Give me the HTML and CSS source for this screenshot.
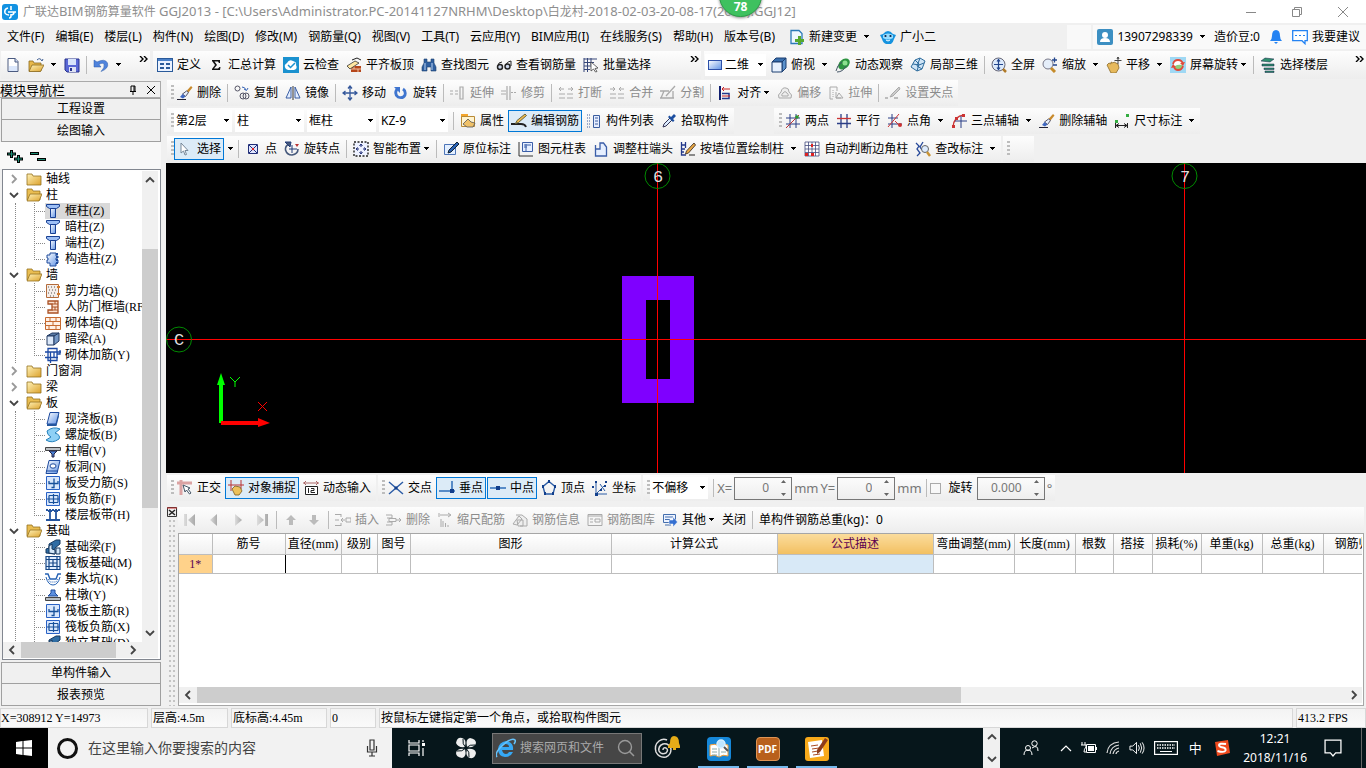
FILE: index.html
```html
<!DOCTYPE html>
<html lang="zh-CN">
<head>
<meta charset="utf-8">
<title>广联达BIM钢筋算量软件 GGJ2013</title>
<link rel="stylesheet" href="styles.css">
</head>
<body>
<svg class="defs" aria-hidden="true">
  <defs>
    <linearGradient id="blue" x1="0" y1="0" x2="1" y2="1"><stop offset="0" stop-color="#fff"/><stop offset="1" stop-color="#5f93e6"/></linearGradient>
    <linearGradient id="gold" x1="0" y1="0" x2="1" y2="1"><stop offset="0" stop-color="#fff2b8"/><stop offset="1" stop-color="#dca22c"/></linearGradient>
    <linearGradient id="grey" x1="0" y1="0" x2="1" y2="0"><stop offset="0" stop-color="#ddd"/><stop offset="1" stop-color="#aaa"/></linearGradient>
  </defs>
  <symbol id="arrow" viewBox="0 0 7 4"><path d="M1 0h5v1H5v1H4v1H3V2H2V1H1z" fill="#000"/></symbol>
  <symbol id="more" viewBox="0 0 9 6"><path d="M1 0l3 3-3 3M5 0l3 3-3 3" fill="none" stroke="#000" stroke-width="1.4"/></symbol>
  <symbol id="chev-r" viewBox="0 0 10 10"><path d="M3 1l4 4-4 4" fill="none" stroke="#999" stroke-width="1.8"/></symbol>
  <symbol id="chev-d" viewBox="0 0 10 10"><path d="M1 3l4 4 4-4" fill="none" stroke="#444" stroke-width="1.8"/></symbol>
  <symbol id="chev-u" viewBox="0 0 10 10"><path d="M1 7l4-4 4 4" fill="none" stroke="#444" stroke-width="1.8"/></symbol>
  <symbol id="sb-l" viewBox="0 0 10 10"><path d="M7 1L3 5l4 4" fill="none" stroke="#444" stroke-width="1.8"/></symbol>
  <symbol id="sb-r" viewBox="0 0 10 10"><path d="M3 1l4 4-4 4" fill="none" stroke="#444" stroke-width="1.8"/></symbol>

  <symbol id="logo" viewBox="0 0 16 16"><rect width="16" height="16" rx="3" fill="#1292e2"/><path d="M9 2v4M9 10v2q0 2-2 2M6 4Q2 5 3 9q1 2 4 2M6 8h8M12 8q0 3-3 3" fill="none" stroke="#fff" stroke-width="1.600"/></symbol>
  <symbol id="new" viewBox="0 0 16 16"><path d="M3 1.500h7l3 3V14.500H3z" fill="#fff" stroke="#4a5a80"/><path d="M4 9h8v5H4z" fill="#dbe7fb"/><path d="M10 1v4h3" fill="#cfdcf5" stroke="#4a5a80"/></symbol>
  <symbol id="open" viewBox="0 0 16 16"><path d="M1 4h4l1 2h7v8H1z" fill="#e8b84a" stroke="#8a6a20" stroke-width=".8"/><path d="M4 8h12l-3.500 6.500H1z" fill="url(#gold)" stroke="#8a6a20" stroke-width=".8"/><path d="M9 3q3-3 5 1l1-2" fill="none" stroke="#3a5a90"/></symbol>
  <symbol id="save" viewBox="0 0 16 16"><path d="M1 2h14v13H3l-2-2z" fill="#5a68d6" stroke="#28338c"/><path d="M4 2h8v6H4z" fill="#d8e4fb"/><path d="M5 10h7v5H5z" fill="#dfe3f3"/><path d="M6 11h2v3H6z" fill="#28338c"/></symbol>
  <symbol id="undo" viewBox="0 0 16 16"><path d="M1 3v7h7L6 7.500q4-2.500 5 0 1 3-3 7 8-3 6.500-8.500Q12 1 4 5z" fill="#4f83dc" stroke="#2858a8" stroke-width=".5"/></symbol>
  <symbol id="define" viewBox="0 0 16 16"><rect x=".500" y="1.500" width="15" height="13" fill="#eaf2ff" stroke="#2a5a9a"/><path d="M1 2h14v2H1z" fill="#4a80c8"/><path d="M3 6h4v2H3zM3 10h4v2H3zM9 6h4v2H9zM9 10h4v2H9z" fill="#2a5a9a"/></symbol>
  <symbol id="sum" viewBox="0 0 16 16"><path d="M4 3h8v3h-1l-1-1.500H6.500L9 8l-3 3.500h4L11.500 10h1L12 13H4v-1l3-4-3-4z" fill="#111"/></symbol>
  <symbol id="cloudcheck" viewBox="0 0 16 16"><rect width="16" height="16" fill="#1a91cf"/><path d="M3 12q-3-4 1-6 2-4 6-2 4 1 3 4 2 4-2 5H5z" fill="#fff"/><path d="M5 8l2.500 2.500L12 6" fill="none" stroke="#1a91cf" stroke-width="1.500"/></symbol>
  <symbol id="flat" viewBox="0 0 16 16"><path d="M5 9h10v6H5z" fill="#b5461a"/><path d="M5 12h10M8 9v3M12 12v3" stroke="#f0c0a0"/><path d="M1 9l8-5 4 2-9 6z" fill="#ffe6a0" stroke="#333" stroke-width=".8"/><path d="M6 3l5-2 4 2" fill="none" stroke="#222"/></symbol>
  <symbol id="find" viewBox="0 0 16 16"><path d="M3 2h3v3h4V2h3v4l2 4v4h-5v-4H6v4H1v-4l2-4z" fill="#2f5f9f" stroke="#1b3f70" stroke-width=".6"/><path d="M4 6v7M11 6v7" stroke="#bcd4f4"/></symbol>
  <symbol id="glasses" viewBox="0 0 16 16"><path d="M2 9q0-4 4-4M10 9q0-4 5-5v5" fill="none" stroke="#222"/><circle cx="4" cy="10" r="2.500" fill="#cdd7ec" stroke="#222" stroke-width="1.500"/><circle cx="11.500" cy="9.500" r="2.500" fill="#cdd7ec" stroke="#222" stroke-width="1.500"/></symbol>
  <symbol id="batch" viewBox="0 0 16 16"><path d="M1 1v14M1 2h13M1 5.500h10M1 9h7M1 12.500h6M4.500 1v14M8 1v7" stroke="#36477a" fill="none"/><path d="M8 5l7 6-3 .5 2 3-1.500.5-2-3L8 14z" fill="#fff" stroke="#444" stroke-width=".8"/></symbol>
  <symbol id="flat2d" viewBox="0 0 16 16"><rect x="1.500" y="3.500" width="13" height="9" fill="url(#blue)" stroke="#2c4fa8"/></symbol>
  <symbol id="cube" viewBox="0 0 16 16"><path d="M1 5l4-4h10l-4 4z" fill="#3a70ae" stroke="#1c3e70"/><path d="M11 5l4-4v10l-4 4z" fill="#5b92cc" stroke="#1c3e70"/><path d="M1 5h10v10H1z" fill="#e8f1fd" stroke="#1c3e70"/></symbol>
  <symbol id="orbit" viewBox="0 0 16 16"><ellipse cx="9" cy="7" rx="6.500" ry="4.500" transform="rotate(-40 9 7)" fill="#2d9440"/><circle cx="10" cy="6" r="2.500" fill="#8be08e"/><path d="M1 14q1-6 6-9M2 15q6 0 9-6" stroke="#456" fill="none"/></symbol>
  <symbol id="part3d" viewBox="0 0 16 16"><path d="M1 10l4-7 5-2 5 3-3 8-5 2z" fill="#cfe4f6" stroke="#2c6b9c"/><path d="M5 3l4 4-2 7M10 1L7 9l5 3M3 7l6 1 5-2" stroke="#2c6b9c" fill="none"/></symbol>
  <symbol id="full" viewBox="0 0 16 16"><circle cx="7.500" cy="7.500" r="6.500" fill="#dbe9fb" stroke="#667"/><path d="M7.500 3v9M3 7.500h9M6 4.500l1.500-2 1.500 2M6 10.500l1.500 2 1.500-2" stroke="#23458c" fill="none" stroke-width="1.200"/><path d="M12 12l3 3" stroke="#b07a28" stroke-width="2.500"/></symbol>
  <symbol id="zoom" viewBox="0 0 16 16"><circle cx="6" cy="7" r="5" fill="#e5eefa" stroke="#778"/><path d="M9 11l4 4" stroke="#c58b2a" stroke-width="3"/><path d="M10 3h5M12.500.5v5M11 8h4" stroke="#23458c" stroke-width="1.300"/></symbol>
  <symbol id="pan" viewBox="0 0 16 16"><path d="M1 8l2-2 2 1V5l2 1 1-1 2 1 2 1 1 4-3 5H5z" fill="#e6b95c" stroke="#8b6a28" stroke-width=".8"/><path d="M12 0v7M8.500 3.500h7M11 2l1-2 1 2" stroke="#444" fill="none"/></symbol>
  <symbol id="rotscreen" viewBox="0 0 16 16"><rect width="16" height="16" fill="#9fd8f4"/><path d="M4 4h8v8H4z" fill="#fff"/><path d="M4 12q0-5 8-4v4z" fill="#8fd07c"/><path d="M3 7q1-4 5-4 4 0 5 4M13 9q-1 4-5 4-3 0-4-3" fill="none" stroke="#e04a3a" stroke-width="1.800"/><path d="M15 5l-2 4-3-3zM1 11l2-4 3 3z" fill="#e04a3a"/></symbol>
  <symbol id="floors" viewBox="0 0 16 16"><path d="M1 4l4-3 9 1-4 3zM2 7h12v2H2zM4 11h10v1.500H4zM5 14h9v1.500H5z" fill="#2f8f6e" stroke="#124" stroke-width=".5"/></symbol>

  <symbol id="eraser" viewBox="0 0 16 16"><path d="M14 1l1.500 1.500-4 5L9.500 6z" fill="#c88a2c"/><path d="M9.500 6l2 1.500-3 4-3-2.500z" fill="#e7eefb" stroke="#556"/><path d="M5.500 9l3 2.500-2.500 2L3 12z" fill="#3f68c2"/><path d="M0 14.500h9" stroke="#223"/></symbol>
  <symbol id="copy" viewBox="0 0 16 16"><circle cx="3.500" cy="3.500" r="2.500" fill="none" stroke="#556"/><circle cx="9" cy="11" r="3" fill="#eee" stroke="#556"/><circle cx="12" cy="11" r="3" fill="none" stroke="#556"/><path d="M8 2q3 0 4 3m-2-1l2.500 1.500L14 3" fill="none" stroke="#3563b5"/></symbol>
  <symbol id="mirror" viewBox="0 0 16 16"><path d="M6 2v11H1zM10 2v11h5z" fill="#e4eeff" stroke="#3b5fa5"/><path d="M8 1v14" stroke="#333"/></symbol>
  <symbol id="move" viewBox="0 0 16 16"><path d="M8 1v14M1 8h14M6 3.500L8 1l2 2.500M6 12.500L8 15l2-2.500M3.500 6L1 8l2.500 2M12.500 6L15 8l-2.500 2" fill="none" stroke="#35589b" stroke-width="1.300"/></symbol>
  <symbol id="rotate" viewBox="0 0 16 16"><path d="M4 4q-3 5 1 8 5 2 7-2 1-4-2-6" fill="none" stroke="#3f75cf" stroke-width="2.800"/><path d="M1 2h6v6z" fill="#3f75cf"/></symbol>
  <symbol id="extend" viewBox="0 0 16 16"><path d="M0 6h3M0 9h3M5 6h3M5 9h3M10 2h3v12h-3z" fill="none" stroke="#aaa" stroke-width="1.200"/></symbol>
  <symbol id="trim" viewBox="0 0 16 16"><path d="M0 6h5M0 9h5M6 1v14M9 1v14M10 7.500h2M13 7.500h2" fill="none" stroke="#aaa" stroke-width="1.200"/></symbol>
  <symbol id="break" viewBox="0 0 16 16"><path d="M1 4h5M10 4h5M3 2L1 4l2 2M13 2l2 2-2 2M1 9h6M1 13h6M9 9h6M9 13h6" fill="none" stroke="#aaa"/></symbol>
  <symbol id="merge" viewBox="0 0 16 16"><path d="M1 4h5M10 4h5M4 2l2 2-2 2M12 2l-2 2 2 2M1 9h6M1 13h6M9 9h6M9 13h6" fill="none" stroke="#aaa"/></symbol>
  <symbol id="split" viewBox="0 0 16 16"><path d="M0 6h9M0 13h14M1 13l3-7M13 6v7M15 1L6 11" fill="none" stroke="#aaa" stroke-width="1.300"/></symbol>
  <symbol id="align" viewBox="0 0 16 16"><path d="M3 1v14" stroke="#111f70" stroke-width="2"/><path d="M5 4h8M5 4l2-2M5 4l2 2" stroke="#c22" fill="none"/><path d="M5 8.500h7v5H5" fill="none" stroke="#23388c" stroke-width="1.500"/><path d="M5 11h8" stroke="#c22"/></symbol>
  <symbol id="offset" viewBox="0 0 16 16"><path d="M2 13q-2-3 2-6 1-5 5-4 3 0 3 4 4 3 2 6z" fill="#eee" stroke="#aaa"/><path d="M5 11q-1-1 1-3 2-3 4 0 2 2 1 3z" fill="none" stroke="#aaa"/></symbol>
  <symbol id="stretch" viewBox="0 0 16 16"><path d="M2 2h7v4M2 2v12h3M8 7v6h5M11 8l4 5h-7z" fill="none" stroke="#aaa"/><path d="M5 5v8" stroke="#aaa" stroke-dasharray="1 1"/></symbol>
  <symbol id="grip-set" viewBox="0 0 16 16"><path d="M14 2L7 9l-2 3 3-1 7-7z" fill="#ccc" stroke="#aaa"/><path d="M0 13h3M9 13h4" stroke="#aaa" stroke-width="1.500"/></symbol>

  <symbol id="props" viewBox="0 0 16 16"><path d="M1 1h7v3H1z" fill="#f4a52c"/><path d="M1.500 3.500h13v10h-13z" fill="#fff3cf" stroke="#b98a35"/><path d="M3 11l5-5 3 3 4 1-2 4H7z" fill="#f0c168" stroke="#555" stroke-width=".8"/></symbol>
  <symbol id="editbar" viewBox="0 0 16 16"><path d="M0 11h10q4 0 5 3" fill="none" stroke="#222" stroke-width="1.800"/><path d="M14 1l1.500 1.500-8 7-3 1 1.500-3z" fill="#efb94a" stroke="#664"/></symbol>
  <symbol id="list" viewBox="0 0 16 16"><path d="M1 2h4M1 5h3M1 8h3M1 11h3M1 14h4" stroke="#3c5fa0" stroke-dasharray="1 1"/><path d="M7.500 2.500h6v12h-6z" fill="#e7eeff" stroke="#3c5fa0"/><path d="M9 5h3M9 8h3M9 11h3" stroke="#3c5fa0"/></symbol>
  <symbol id="pick" viewBox="0 0 16 16"><path d="M2 14l1-3 6-6 2 2-6 6z" fill="#dcecff" stroke="#335"/><path d="M7 4l5 5 1.500-1.500L12 6l3-3-2-2-3 3-1.500-1.500z" fill="#1d4fa0"/></symbol>
  <symbol id="twopt" viewBox="0 0 16 16"><path d="M1 5h14M1 11h14M5 1v14M11 1v14" stroke="#2b3e86"/><path d="M1 15L14 2" stroke="#b33"/><circle cx="12" cy="4" r="1.800" fill="#2a9a2a"/></symbol>
  <symbol id="parallel" viewBox="0 0 16 16"><path d="M1 10.500h14M5 1v14M11 1v14" stroke="#2b3e86" stroke-width="1.300"/><path d="M1 5.500h14" stroke="#c33" stroke-width="1.300"/></symbol>
  <symbol id="angle" viewBox="0 0 16 16"><path d="M1 5h10M1 11h14M5 1v14" stroke="#2b3e86"/><path d="M1 14L12 1M8 8l4 4" stroke="#c33" fill="none"/><circle cx="13" cy="12" r="2" fill="#c33"/></symbol>
  <symbol id="threept" viewBox="0 0 16 16"><path d="M2 14q1-11 11-12" stroke="#c33" fill="none" stroke-width="1.300"/><path d="M4 8h12M10 3v12" stroke="#2b3e86"/><path d="M1 12h3v3H1zM11 1h3v3h-3zM4 4h3v3H4z" fill="#c33"/></symbol>
  <symbol id="dim" viewBox="0 0 16 16"><path d="M1 7h3v3H1zM12 1h3v3h-3z" fill="#34ad41"/><path d="M1.500 10v5M13.500 10v5M2 12.500h11M5 10.500l-3 2 3 2M10 10.500l3 2-3 2" stroke="#222" fill="none"/></symbol>

  <symbol id="cursor" viewBox="0 0 16 16"><path d="M4 2v10l2.500-2L8 14l1.500-.5L8 9.500h3z" fill="#fff" stroke="#789"/></symbol>
  <symbol id="ptbox" viewBox="0 0 16 16"><path d="M3.500 3.500h9v9h-9z" fill="#dfe6ff" stroke="#222f79"/><path d="M4 4l8 8M12 4l-8 8" stroke="#222f79"/><circle cx="8" cy="8" r="1.200" fill="#d22"/></symbol>
  <symbol id="rotpt" viewBox="0 0 16 16"><path d="M5 3Q1 5 1.500 9 3 14 8 14q6-1 6-6" fill="none" stroke="#46597c" stroke-width="1.600"/><path d="M1 1l6 0-1 5zM8 4v8M5 8h8" stroke="#233d78" fill="#46597c"/><path d="M11 3l4 0-2 3z" fill="#b33"/></symbol>
  <symbol id="smart" viewBox="0 0 16 16"><path d="M1 1h14v14H1z" fill="#eef2ff" stroke="#222" stroke-width="1.400" stroke-dasharray="2 1.500"/><path d="M8 3v3M8 10v3M3 8h3M10 8h3M6.500 5L8 3l1.500 2M6.500 11L8 13l1.500-2M5 6.500L3 8l2 1.500M11 6.500L13 8l-2 1.500" stroke="#222f79" fill="none"/></symbol>
  <symbol id="note" viewBox="0 0 16 16"><path d="M1.500 3.500h11v10h-11z" fill="#e3efff" stroke="#4d75b8"/><path d="M14 1l2 2-8 8-3 1 1-3z" fill="#2a63b5" stroke="#123"/></symbol>
  <symbol id="coltable" viewBox="0 0 16 16"><path d="M1 1v14h14" stroke="#333" fill="none"/><path d="M4.500 1.500h10v9h-10z" fill="#e6efff" stroke="#3b5ea8"/><path d="M6 4h7M6 6h3M8 3v7" stroke="#3b5ea8"/></symbol>
  <symbol id="adjust" viewBox="0 0 16 16"><path d="M2.500 4v11h11V6l-3-4H7v6H3" fill="#e6efff" stroke="#3b5ea8" stroke-width="1.300"/></symbol>
  <symbol id="wallcol" viewBox="0 0 16 16"><path d="M1.500 1v13H6M5.500 1v6M1 4h5M1 8h4M1 11h3" fill="none" stroke="#243a8c" stroke-width="1.300"/><path d="M14 2l1.500 2-7 8-3 1 1-3z" fill="#eba943" stroke="#543"/><path d="M9 14h6" stroke="#222"/></symbol>
  <symbol id="autocorner" viewBox="0 0 16 16"><path d="M1 1h14v14H1zM1 4.500h14M1 8h14M1 11.500h14M4.500 1v14M8 1v14M11.500 1v14" fill="#fff" stroke="#444b7e" stroke-width=".8"/><path d="M7 3h2v3H7zM1 12h3v3H1zM7 12h3v3H7z" fill="#d22"/></symbol>
  <symbol id="check" viewBox="0 0 16 16"><path d="M1 2l3 3-2 3 3 4-3 3M8 1L5 6l2 3" stroke="#27499a" fill="none" stroke-width="1.300"/><circle cx="10" cy="8" r="3.500" fill="#dbeafd" stroke="#666"/><path d="M12 11l3 4" stroke="#c99333" stroke-width="2.500"/></symbol>

  <symbol id="ortho" viewBox="0 0 16 16"><path d="M0 3h15M4 0v15" stroke="#dba3a3" stroke-width="3"/><path d="M6 5l2 7 1.500-2 3 4 1.500-1-3-4 2-1z" fill="#fff" stroke="#456"/></symbol>
  <symbol id="snap" viewBox="0 0 16 16"><path d="M0 5h16M3 0v11M13 0v9" stroke="#b33"/><path d="M4 9l3-3 5 1 2 4-3 4H7z" fill="#edc15b" stroke="#7a5b1f" stroke-width=".8"/></symbol>
  <symbol id="dyn" viewBox="0 0 16 16"><path d="M0 3h16M3 1L1 3l2 2M13 1l2 2-2 2" stroke="#a66" fill="none"/><path d="M2.500 6.500h12v8h-12z" fill="#fff" stroke="#222"/><path d="M5.500 8v5M8 8.500h3v2H8v2h4" stroke="#222" fill="none"/></symbol>
  <symbol id="cross" viewBox="0 0 16 16"><path d="M1 2l14 12M15 2L1 14" stroke="#2d5da6" stroke-width="1.500"/><path d="M6.500 6.500h3v3h-3z" fill="#123f8c"/></symbol>
  <symbol id="perp" viewBox="0 0 16 16"><path d="M0 11h16M13 1v11" stroke="#2d6db8" stroke-width="1.500"/><path d="M11 9h4v4h-4z" fill="#123f8c"/></symbol>
  <symbol id="mid" viewBox="0 0 16 16"><path d="M0 8h16" stroke="#2d6db8" stroke-width="1.500"/><path d="M6 6h4v4H6z" fill="#123f8c"/></symbol>
  <symbol id="vertex" viewBox="0 0 16 16"><path d="M8 1.500l6 5L12 14H4L2 6.500z" fill="none" stroke="#2d5da6" stroke-width="1.400"/><path d="M7 0h2v3H7zM1 5h2v3H1zM13 5h2v3h-2zM3 12h2v3H3zM11 12h2v3h-2z" fill="#123f8c"/></symbol>
  <symbol id="coord" viewBox="0 0 16 16"><path d="M4 3v11h11M4 14l9-9M8 4l5 7" stroke="#2d5da6" fill="none"/><path d="M3 1h2v2H3zM13 1h2v2h-2zM12 5h2v2h-2zM3 13h3v3H3zM0 6h2v2H0zM8 9h2v2H8z" fill="#123f8c"/></symbol>

  <symbol id="first" viewBox="0 0 16 16"><path d="M2 2h3v12H2zM13 2v12L6 8z" fill="url(#grey)"/></symbol>
  <symbol id="prev" viewBox="0 0 16 16"><path d="M11 2v12L4 8z" fill="url(#grey)"/></symbol>
  <symbol id="next" viewBox="0 0 16 16"><path d="M5 2v12l7-6z" fill="url(#grey)"/></symbol>
  <symbol id="last" viewBox="0 0 16 16"><path d="M3 2v12l7-6zM11 2h3v12h-3z" fill="url(#grey)"/></symbol>
  <symbol id="up" viewBox="0 0 16 16"><path d="M8 3l5 5h-3v5H6V8H3z" fill="#bbb"/></symbol>
  <symbol id="down" viewBox="0 0 16 16"><path d="M8 13l5-5h-3V3H6v5H3z" fill="#bbb"/></symbol>
  <symbol id="insert" viewBox="0 0 16 16"><path d="M0 2.500h6M0 8h4M0 13.500h6M6 2v3M6 11v3M6 8h4M8 6L6 8l2 2M11 6h5v4h-5z" fill="none" stroke="#aaa"/></symbol>
  <symbol id="delrow" viewBox="0 0 16 16"><path d="M0 3h6v3H1M0 13h6v-3H1M3 6.500h7v3H3zM10 8h5M13 6l2 2-2 2" fill="none" stroke="#aaa"/></symbol>
  <symbol id="scale" viewBox="0 0 16 16"><path d="M3 3h10M11 1l3 2-3 2M2 1v4M4 7v8M6 9v6M8.500 11v4M11 13v2" fill="none" stroke="#aaa"/></symbol>
  <symbol id="info" viewBox="0 0 16 16"><path d="M4 3h6l5 4v7H8M1 12l6-8 3 3-5 6zM5 8h6v6H6z" fill="#eee" stroke="#aaa"/></symbol>
  <symbol id="lib" viewBox="0 0 16 16"><path d="M1 2.500h14v11H1z" fill="#f5f5f5" stroke="#aaa"/><path d="M1 4h14M3 7h3M3 10h3M8 7h5v3H8z" stroke="#aaa" fill="none"/></symbol>
  <symbol id="other" viewBox="0 0 16 16"><path d="M1.500 2.500h12v8h-12zM3 13h6" fill="#edf3ff" stroke="#456fae"/><path d="M3 5h8M3 7.500h5" stroke="#456fae"/><path d="M7 8h4V5l4.500 5-4.500 5v-3H7z" fill="#356fd0" stroke="#fff" stroke-width=".5"/></symbol>

  <symbol id="change" viewBox="0 0 16 16"><path d="M2 1.500h8l3 3v10H2z" fill="#eff7ff" stroke="#2b7ab8" stroke-width="1.300"/><path d="M9 7h3v3h3v3h-3v3H9v-3H6v-3h3z" fill="#56a82e"/></symbol>
  <symbol id="mascot" viewBox="0 0 16 16"><path d="M0 6l3-1Q8-1 13 5l3 1-2 4q-1 4-3 5H6q-3-1-4-5z" fill="#1693df"/><path d="M3 6q5-3 10 0v3q-5 3-10 0z" fill="#96dcff"/><circle cx="5.500" cy="7" r="1.100" fill="#124"/><circle cx="10.500" cy="7" r="1.100" fill="#124"/><path d="M6 11q2 2 4 0" stroke="#fff" fill="none"/></symbol>
  <symbol id="user" viewBox="0 0 16 16"><rect width="16" height="16" rx="2" fill="#3c8fc2"/><circle cx="8" cy="6" r="3" fill="#fff"/><path d="M3 13q0-4 5-4t5 4z" fill="#fff"/></symbol>
  <symbol id="bell" viewBox="0 0 16 16"><path d="M8 1q4 0 4 6 0 3 2 5H2q2-2 2-5 0-6 4-6zM6 13h4l-2 2z" fill="#2483f3"/></symbol>
  <symbol id="bubble" viewBox="0 0 16 16"><path d="M.700 1.700h14.600v10H13v3l-3-3H.700z" fill="#fff" stroke="#2483f3" stroke-width="1.300"/><path d="M3 6.500h2M7 6.500h2M11 6.500h2" stroke="#2483f3"/></symbol>

  <symbol id="folder" viewBox="0 0 16 16"><path d="M1 3h5l1 2h8v9H1z" fill="url(#gold)" stroke="#94711f" stroke-width=".800"/></symbol>
  <symbol id="folder-open" viewBox="0 0 16 16"><path d="M1 2h5l1 2h7v9H1z" fill="#e9bd51" stroke="#94711f" stroke-width=".800"/><path d="M4 7h12l-3 7H1z" fill="url(#gold)" stroke="#94711f" stroke-width=".800"/></symbol>
  <symbol id="column" viewBox="0 0 16 16"><path d="M1.500 1.500h13v2l-3 2h-7l-3-2z" fill="#9dbff5" stroke="#173f93"/><path d="M5.500 5.500h5v9h-5z" fill="url(#blue)" stroke="#173f93"/></symbol>
  <symbol id="strcol" viewBox="0 0 16 16"><path d="M5 2h6v3h2v2h-2v2h2v3h-2v3H5v-3H2V9h1V7H2V4h3z" fill="url(#blue)" stroke="#204c9c"/><path d="M12 2v12" stroke="#204c9c" stroke-width="2" stroke-dasharray="2 1"/></symbol>
  <symbol id="shear" viewBox="0 0 16 16"><path d="M1.500 1.500h12v13h-12z" fill="#f5ede8" stroke="#b46b3b"/><path d="M3 4h9M4 7h8M3 10h9M5 13h6" stroke="#555" stroke-dasharray="1 2"/><path d="M12 4h3M12 11h3" stroke="#d67c2c" stroke-width="2"/></symbol>
  <symbol id="guard" viewBox="0 0 16 16"><path d="M3 2h10v12H3v-3h4V5H3z" fill="#fbe0cf" stroke="#aa5226" stroke-width="1.300"/><path d="M7 5h6M7 8h6M7 11h6M10 2v3M10 8v3" stroke="#aa5226"/></symbol>
  <symbol id="brick" viewBox="0 0 16 16"><path d="M.500 2.500h15v12H.500zM1 6.500h14M1 10.500h14M5 3v3M11 3v3M8 7v3M4 11v3M11 11v3" fill="#fff1e6" stroke="#c66b31"/></symbol>
  <symbol id="hbeam" viewBox="0 0 16 16"><path d="M2 5l5-3h7l-4 3z" fill="#5a7ba5" stroke="#223a62"/><path d="M2 5h7v9H2z" fill="#dce9fa" stroke="#223a62"/><path d="M9 5l5-3v8l-5 4z" fill="#7497c5" stroke="#223a62"/></symbol>
  <symbol id="rebar" viewBox="0 0 16 16"><path d="M3 1.500h9v12H3zM0 5h16M0 10.500h13M5.500 5v11M9 5v6M12 7h3V3" fill="none" stroke="#1d4aa5" stroke-width="1.300"/></symbol>
  <symbol id="slab" viewBox="0 0 16 16"><path d="M5 1.500h9L11 13H2z" fill="url(#blue)" stroke="#1d4a9e"/><path d="M2 13h9l3-11v3l-2.500 10H2z" fill="#23569f"/></symbol>
  <symbol id="spiral" viewBox="0 0 16 16"><path d="M2 4q6-5 13-2l-5 4q6 2 4 6-7 5-13 1l5-3Q2 8 2 4z" fill="#8ed0f5" stroke="#2581bd"/></symbol>
  <symbol id="cap" viewBox="0 0 16 16"><path d="M.500 4.500h15v3H.500z" fill="#bcc0c4" stroke="#444"/><path d="M4 8h8l-3 3v3H7v-3z" fill="#4a7fd2" stroke="#224"/></symbol>
  <symbol id="hole" viewBox="0 0 16 16"><path d="M4 1.500h11L12 14.500H1z" fill="url(#blue)" stroke="#1d4a9e"/><ellipse cx="8" cy="7" rx="3" ry="2.200" fill="#fff" stroke="#1d4a9e"/><path d="M1 12h12" stroke="#1d4a9e"/></symbol>
  <symbol id="sforce" viewBox="0 0 16 16"><path d="M1.500 1.500h13v13h-13z" fill="#d9e7fc" stroke="#2a62c5"/><path d="M4 6v2.500h9V6M9 3.500v9H6.500" fill="none" stroke="#17509a" stroke-width="1.300"/></symbol>
  <symbol id="sneg" viewBox="0 0 16 16"><path d="M1.500 1.500h13v13h-13z" fill="#d9e7fc" stroke="#2a62c5"/><path d="M4 4.500h9M8.500 3v10M2 8h12M4 11.500h9M4 4.500v7M13 4.500v7" fill="none" stroke="#17509a" stroke-width="1.200"/></symbol>
  <symbol id="band" viewBox="0 0 16 16"><path d="M1 3h14" stroke="#24549f" stroke-width="2" stroke-dasharray="2 1"/><path d="M5 4v8M11 4v8M3 4h4M9 4h4M1 13h14" stroke="#24549f" stroke-width="1.800"/></symbol>
  <symbol id="fbeam" viewBox="0 0 16 16"><path d="M1 14v-4l3-1V5l7-4h4v4l-5 4v6z" fill="#2f6da4" stroke="#17395f"/><path d="M4 14V7l3-2v5l3 1v4zM11 9h4v6h-4z" fill="#d5e8f8" stroke="#17395f"/></symbol>
  <symbol id="raft" viewBox="0 0 16 16"><path d="M1 1.500h14v13H1zM4 1v14M12 1v14M1 4.500h14M1 11.500h14M8 4v8M4 8h8" fill="#e4f0ff" stroke="#174888" stroke-width="1.200"/></symbol>
  <symbol id="pit" viewBox="0 0 16 16"><path d="M0 3h3l2 5h6l2-5h3" fill="none" stroke="#2461b4" stroke-width="1.400"/><path d="M1 6q2 8 7 8t7-8" stroke="#2461b4" fill="none"/><path d="M3 8l2 3h6l2-3" stroke="#2461b4" stroke-dasharray="1 1" fill="none"/></symbol>
  <symbol id="pier" viewBox="0 0 16 16"><path d="M6 3h4v3l3 3H3l3-3z" fill="#5b8fe0" stroke="#204c9c"/><path d="M.500 10.500h15v3H.500z" fill="#b7bdc4" stroke="#444"/></symbol>

  <symbol id="t-win" viewBox="0 0 16 16"><path d="M0 2l6.500-1v6.500H0zM7.500.900L16 0v7.500H7.500zM0 8.500h6.500V15L0 14zM7.500 8.500H16V16l-8.500-1z" fill="#fff"/></symbol>
  <symbol id="t-mic" viewBox="0 0 12 18"><path d="M4 1h4v10H4zM1.500 7v6h9V7M6 13v4M3 17h6" fill="none" stroke="#333" stroke-width="1.200"/></symbol>
  <symbol id="t-view" viewBox="0 0 18 16"><path d="M1 0v3h10V0M1 5h10v6H1zM1 16v-3h10v3" fill="none" stroke="#fff" stroke-width="1.200"/><path d="M15 0v2M15 8v8" stroke="#fff" stroke-width="1.200"/><path d="M14 3h3v3h-3z" fill="#fff"/></symbol>
  <symbol id="t-fan" viewBox="0 0 22 22"><path d="M10 10Q3 11 1 6 2 0 7 1q5 1 3 9zM12 10Q10 2 15 1q6 1 6 5-1 5-9 4zM12 12q8-1 9 4-1 6-6 5-5-1-3-9zM10 12q2 8-3 9-6-1-6-5 1-5 9-4z" fill="#eee"/><path d="M11 11Q7 7 8 2M11 11q4-4 9-3M11 11q4 4 3 9M11 11q-4 4-9 3" stroke="#06161b" fill="none"/></symbol>
  <symbol id="t-ie" viewBox="0 0 20 20"><path d="M17 14q-2 5-8 5-7-1-7-8 1-7 8-8 8 1 7 9H6q1 4 4 4 2 0 3-2zM6 9h7q0-3-3.500-3T6 9z" fill="#36a8f4"/><path d="M1 19q-3-4 6-12 9-8 12-5 1 1-1 4" fill="none" stroke="#66c3fb" stroke-width="1.600"/></symbol>
  <symbol id="t-mag" viewBox="0 0 18 18"><circle cx="8" cy="8" r="6.500" fill="none" stroke="#999" stroke-width="1.400"/><path d="M12.500 12.500L17 17" stroke="#999" stroke-width="1.500"/></symbol>
  <symbol id="t-spiral" viewBox="0 0 28 26"><path d="M10 15q0-3 3-2 3 2 0 5-5 2-7-2-1-5 4-7 6-1 8 5 0 6-5 8-7 1-10-5-2-7 3-11 4-3 8-1" fill="none" stroke="#ddd" stroke-width="1.500"/><path d="M21 1q5 0 5 7l1 3v2H15v-2l2-3q0-7 4-7zM20 13h3v2h-3z" fill="#e6ac18"/></symbol>
  <symbol id="t-book" viewBox="0 0 24 24"><rect width="24" height="24" rx="4" fill="#1687d8"/><path d="M3 8q5-2 9 1 4-3 9-1v11q-5-2-9 1-4-3-9-1z" fill="#fff" stroke="#ef9b33"/><path d="M12 9v11M5 12h5M5 15h5M14 15h5M5 18h5" stroke="#8aa" fill="none"/><circle cx="14" cy="7" r="4" fill="#bfe6ff" stroke="#d8f0ff" stroke-width="1.500"/><path d="M17 10l4 4" stroke="#555" stroke-width="2"/></symbol>
  <symbol id="t-note" viewBox="0 0 24 24"><rect width="24" height="24" rx="3" fill="#f7a91a"/><path d="M3 5l14-2 2 16-14 2z" fill="#fff"/><path d="M6 9l7-1M7 12l7-1M7 15l6-1M8 18l7-1" stroke="#a84b23"/><path d="M20 1l3 2-8 12-3 2v-4z" fill="#8c3c1c"/></symbol>
  <symbol id="t-people" viewBox="0 0 16 16"><circle cx="5" cy="8" r="2.500" fill="none" stroke="#fff"/><circle cx="11.500" cy="3.500" r="2.700" fill="none" stroke="#fff"/><path d="M1 15q0-5 4-5t4 5M9 8q6-4 6 3" fill="none" stroke="#fff"/></symbol>
  <symbol id="t-chev" viewBox="0 0 12 12"><path d="M1 9l5-5 5 5" fill="none" stroke="#fff" stroke-width="1.200"/></symbol>
  <symbol id="t-bat" viewBox="0 0 16 16"><path d="M5.500 4.500h9v8h-9z" fill="none" stroke="#fff"/><path d="M7 6h6v5H7zM15 7h1v3h-1z" fill="#fff"/><path d="M1 2v3M4 2v3M0 5h5v2q-2 2-2 5h2" stroke="#fff" fill="none"/></symbol>
  <symbol id="t-wifi" viewBox="0 0 14 14"><path d="M1 12Q2 2 13 1M4 13Q5 5 13 4M7 13q1-5 6-6M10 13q0-2 3-3" fill="none" stroke="#ddd" stroke-width="1.200"/></symbol>
  <symbol id="t-vol" viewBox="0 0 17 14"><path d="M1 5h3l4-4v12L4 9H1z" fill="none" stroke="#fff"/><path d="M10 4q2 3 0 6M12 2q3 5 0 10M14 1q4 6 0 12" fill="none" stroke="#fff"/></symbol>
  <symbol id="t-kbd" viewBox="0 0 24 14"><rect x=".600" y=".600" width="22.800" height="12.800" fill="none" stroke="#fff" stroke-width="1.200"/><path d="M3 4h18M3 7h18" stroke="#fff" stroke-width="1.300" stroke-dasharray="1.500 1"/><path d="M6 10.500h12" stroke="#fff"/></symbol>
  <symbol id="t-sogou" viewBox="0 0 16 16"><path d="M1 2l13-2 2 13-13 3z" fill="#ef4a1e"/><path d="M12 4q-7-1-7 1 0 2 4 2.500 3 .5 2.500 3-1 2.500-8 .5" fill="none" stroke="#fff" stroke-width="2"/></symbol>
  <symbol id="t-msg" viewBox="0 0 17 17"><path d="M1 1h15v12h-5l-2.500 3L6 13H1z" fill="none" stroke="#fff" stroke-width="1.200"/></symbol>
</svg>

<div class="window">
  <header class="titlebar">
    <svg class="ic"><use href="#logo"/></svg>
    <h1><span>广联达</span>BIM<span>钢筋算量软件</span> GGJ2013 - [C:\Users\Administrator.PC-20141127NRHM\Desktop\<span>白龙村</span>-2018-02-03-20-08-17(2666).GGJ12]</h1>
    <span class="badge">78</span>
    <div class="wincontrols">
      <button aria-label="最小化"><svg viewBox="0 0 10 10"><path d="M0 5.500h10" stroke="#888"/></svg></button>
      <button aria-label="还原"><svg viewBox="0 0 10 10"><path d="M.500 2.500h7v7h-7zM2.500 2V.500h7v7H8" fill="none" stroke="#888"/></svg></button>
      <button aria-label="关闭"><svg viewBox="0 0 10 10"><path d="M0 0l10 10M10 0L0 10" stroke="#888"/></svg></button>
    </div>
  </header>

  <nav class="menubar">
    <button>文件(F)</button><button>编辑(E)</button><button>楼层(L)</button><button>构件(N)</button><button>绘图(D)</button><button>修改(M)</button><button>钢筋量(Q)</button><button>视图(V)</button><button>工具(T)</button><button>云应用(Y)</button><button>BIM应用(I)</button><button>在线服务(S)</button><button>帮助(H)</button><button>版本号(B)</button>
    <button class="tool"><svg class="ic"><use href="#change"/></svg>新建变更<svg class="arr"><use href="#arrow"/></svg></button>
    <button class="tool"><svg class="ic"><use href="#mascot"/></svg>广小二</button>
    <span class="stub"></span>
    <div class="account">
      <button class="tool"><svg class="ic"><use href="#user"/></svg>13907298339<svg class="arr"><use href="#arrow"/></svg></button>
      <button class="tool">造价豆:0</button>
      <button class="tool" aria-label="通知"><svg class="ic"><use href="#bell"/></svg></button>
      <button class="tool"><svg class="ic"><use href="#bubble"/></svg>我要建议</button>
    </div>
  </nav>

  <div class="toprow">
    <div class="group quick">
      <button class="tool" aria-label="新建"><svg class="ic"><use href="#new"/></svg></button>
      <button class="tool" aria-label="打开"><svg class="ic"><use href="#open"/></svg><svg class="arr"><use href="#arrow"/></svg></button>
      <button class="tool" aria-label="保存"><svg class="ic"><use href="#save"/></svg></button>
      <i class="sep"></i>
      <button class="tool" aria-label="撤销"><svg class="ic"><use href="#undo"/></svg><svg class="arr"><use href="#arrow"/></svg></button>
      <svg class="more"><use href="#more"/></svg>
    </div>
    <div class="group common">
      <button class="tool"><svg class="ic"><use href="#define"/></svg>定义</button>
      <button class="tool"><svg class="ic"><use href="#sum"/></svg>汇总计算</button>
      <button class="tool"><svg class="ic"><use href="#cloudcheck"/></svg>云检查</button>
      <button class="tool"><svg class="ic"><use href="#flat"/></svg>平齐板顶</button>
      <button class="tool"><svg class="ic"><use href="#find"/></svg>查找图元</button>
      <button class="tool"><svg class="ic"><use href="#glasses"/></svg>查看钢筋量</button>
      <button class="tool"><svg class="ic"><use href="#batch"/></svg>批量选择</button>
      <svg class="more"><use href="#more"/></svg>
    </div>
    <div class="group view">
      <label class="combo c-view"><svg class="ic"><use href="#flat2d"/></svg><select aria-label="视图模式"><option>二维</option></select><svg class="arr"><use href="#arrow"/></svg></label>
      <button class="tool"><svg class="ic"><use href="#cube"/></svg>俯视<svg class="arr"><use href="#arrow"/></svg></button>
      <button class="tool"><svg class="ic"><use href="#orbit"/></svg>动态观察</button>
      <button class="tool"><svg class="ic"><use href="#part3d"/></svg>局部三维</button>
      <i class="sep"></i>
      <button class="tool"><svg class="ic"><use href="#full"/></svg>全屏</button>
      <button class="tool"><svg class="ic"><use href="#zoom"/></svg>缩放<svg class="arr"><use href="#arrow"/></svg></button>
      <button class="tool"><svg class="ic"><use href="#pan"/></svg>平移<svg class="arr"><use href="#arrow"/></svg></button>
      <button class="tool"><svg class="ic"><use href="#rotscreen"/></svg>屏幕旋转<svg class="arr tight"><use href="#arrow"/></svg></button>
      <i class="sep"></i>
      <button class="tool"><svg class="ic"><use href="#floors"/></svg>选择楼层</button>
      <svg class="more"><use href="#more"/></svg>
    </div>
  </div>

  <div class="body">
    <aside class="side">
      <div class="side-title"><h2>模块导航栏</h2>
        <button aria-label="固定"><svg viewBox="0 0 10 10"><path d="M2 6.500h6M3 6V1h4v5M6 1v5M5 7v3" fill="none" stroke="#000"/></svg></button>
        <button aria-label="关闭"><svg viewBox="0 0 10 10"><path d="M1 1l8 8M9 1L1 9" stroke="#000"/></svg></button>
      </div>
      <button class="section">工程设置</button>
      <button class="section">绘图输入</button>
      <div class="side-tools">
        <button aria-label="全部展开"><svg viewBox="0 0 16 13"><path d="M4.500 0v8M0 4h9" stroke="#000" stroke-width="3"/><path d="M4.500 1v6M1 4h7" stroke="#1b8d74"/><path d="M11.500 5v8M7 9h9" stroke="#000" stroke-width="3"/><path d="M11.500 6v6M8 9h7" stroke="#1b8d74"/></svg></button>
        <button aria-label="全部折叠"><svg viewBox="0 0 16 13"><path d="M0 3.500h9M7 9.500h9" stroke="#000" stroke-width="3"/><path d="M1 3.500h7M8 9.500h7" stroke="#1b8d74"/></svg></button>
      </div>
      <div class="treebox">
        <div class="treeview">
          <ul class="tree">
            <li><div class="node"><svg class="chev"><use href="#chev-r"/></svg><svg class="ic"><use href="#folder"/></svg>轴线</div></li>
            <li><div class="node"><svg class="chev"><use href="#chev-d"/></svg><svg class="ic"><use href="#folder-open"/></svg>柱</div>
              <ul>
                <li><span class="leaf on"><svg class="ic"><use href="#column"/></svg>框柱(Z)</span></li>
                <li><span class="leaf"><svg class="ic"><use href="#column"/></svg>暗柱(Z)</span></li>
                <li><span class="leaf"><svg class="ic"><use href="#column"/></svg>端柱(Z)</span></li>
                <li><span class="leaf"><svg class="ic"><use href="#strcol"/></svg>构造柱(Z)</span></li>
              </ul></li>
            <li><div class="node"><svg class="chev"><use href="#chev-d"/></svg><svg class="ic"><use href="#folder-open"/></svg>墙</div>
              <ul>
                <li><span class="leaf"><svg class="ic"><use href="#shear"/></svg>剪力墙(Q)</span></li>
                <li><span class="leaf"><svg class="ic"><use href="#guard"/></svg>人防门框墙(RF)</span></li>
                <li><span class="leaf"><svg class="ic"><use href="#brick"/></svg>砌体墙(Q)</span></li>
                <li><span class="leaf"><svg class="ic"><use href="#hbeam"/></svg>暗梁(A)</span></li>
                <li><span class="leaf"><svg class="ic"><use href="#rebar"/></svg>砌体加筋(Y)</span></li>
              </ul></li>
            <li><div class="node"><svg class="chev"><use href="#chev-r"/></svg><svg class="ic"><use href="#folder"/></svg>门窗洞</div></li>
            <li><div class="node"><svg class="chev"><use href="#chev-r"/></svg><svg class="ic"><use href="#folder"/></svg>梁</div></li>
            <li><div class="node"><svg class="chev"><use href="#chev-d"/></svg><svg class="ic"><use href="#folder-open"/></svg>板</div>
              <ul>
                <li><span class="leaf"><svg class="ic"><use href="#slab"/></svg>现浇板(B)</span></li>
                <li><span class="leaf"><svg class="ic"><use href="#spiral"/></svg>螺旋板(B)</span></li>
                <li><span class="leaf"><svg class="ic"><use href="#cap"/></svg>柱帽(V)</span></li>
                <li><span class="leaf"><svg class="ic"><use href="#hole"/></svg>板洞(N)</span></li>
                <li><span class="leaf"><svg class="ic"><use href="#sforce"/></svg>板受力筋(S)</span></li>
                <li><span class="leaf"><svg class="ic"><use href="#sneg"/></svg>板负筋(F)</span></li>
                <li><span class="leaf"><svg class="ic"><use href="#band"/></svg>楼层板带(H)</span></li>
              </ul></li>
            <li><div class="node"><svg class="chev"><use href="#chev-d"/></svg><svg class="ic"><use href="#folder-open"/></svg>基础</div>
              <ul>
                <li><span class="leaf"><svg class="ic"><use href="#fbeam"/></svg>基础梁(F)</span></li>
                <li><span class="leaf"><svg class="ic"><use href="#raft"/></svg>筏板基础(M)</span></li>
                <li><span class="leaf"><svg class="ic"><use href="#pit"/></svg>集水坑(K)</span></li>
                <li><span class="leaf"><svg class="ic"><use href="#pier"/></svg>柱墩(Y)</span></li>
                <li><span class="leaf"><svg class="ic"><use href="#sforce"/></svg>筏板主筋(R)</span></li>
                <li><span class="leaf"><svg class="ic"><use href="#sneg"/></svg>筏板负筋(X)</span></li>
                <li class="open-end"><span class="leaf"><svg class="ic"><use href="#fbeam"/></svg>独立基础(D)</span></li>
              </ul></li>
          </ul>
          <div class="vbar"><svg><use href="#chev-u"/></svg><i></i><svg><use href="#chev-d"/></svg></div>
        </div>
        <div class="hbar side-h"><svg><use href="#sb-l"/></svg><i></i><svg><use href="#sb-r"/></svg></div>
      </div>
      <button class="section">单构件输入</button>
      <button class="section">报表预览</button>
    </aside>

    <main class="work">
      <div class="toolrow">
        <div class="group">
          <i class="grip"></i>
          <button class="tool"><svg class="ic"><use href="#eraser"/></svg>删除</button>
          <i class="sep"></i>
          <button class="tool"><svg class="ic"><use href="#copy"/></svg>复制</button>
          <button class="tool"><svg class="ic"><use href="#mirror"/></svg>镜像</button>
          <i class="sep"></i>
          <button class="tool"><svg class="ic"><use href="#move"/></svg>移动</button>
          <button class="tool"><svg class="ic"><use href="#rotate"/></svg>旋转</button>
          <i class="sep"></i>
          <button class="tool" disabled><svg class="ic"><use href="#extend"/></svg>延伸</button>
          <button class="tool" disabled><svg class="ic"><use href="#trim"/></svg>修剪</button>
          <i class="sep"></i>
          <button class="tool" disabled><svg class="ic"><use href="#break"/></svg>打断</button>
          <button class="tool" disabled><svg class="ic"><use href="#merge"/></svg>合并</button>
          <button class="tool" disabled><svg class="ic"><use href="#split"/></svg>分割</button>
          <i class="sep"></i>
          <button class="tool"><svg class="ic"><use href="#align"/></svg>对齐<svg class="arr tight"><use href="#arrow"/></svg></button>
          <button class="tool" disabled><svg class="ic"><use href="#offset"/></svg>偏移</button>
          <button class="tool" disabled><svg class="ic"><use href="#stretch"/></svg>拉伸</button>
          <i class="sep"></i>
          <button class="tool" disabled><svg class="ic"><use href="#grip-set"/></svg>设置夹点</button>
        </div>
      </div>
      <div class="toolrow">
        <div class="group">
          <i class="grip"></i>
          <label class="combo c-small"><select aria-label="楼层"><option>第2层</option></select><svg class="arr"><use href="#arrow"/></svg></label>
          <label class="combo"><select aria-label="构件类别"><option>柱</option></select><svg class="arr"><use href="#arrow"/></svg></label>
          <label class="combo"><select aria-label="构件类型"><option>框柱</option></select><svg class="arr"><use href="#arrow"/></svg></label>
          <label class="combo"><select aria-label="构件名称"><option>KZ-9</option></select><svg class="arr"><use href="#arrow"/></svg></label>
          <i class="sep"></i>
          <button class="tool"><svg class="ic"><use href="#props"/></svg>属性</button>
          <button class="tool on"><svg class="ic"><use href="#editbar"/></svg>编辑钢筋</button>
          <button class="tool"><svg class="ic"><use href="#list"/></svg>构件列表</button>
          <button class="tool"><svg class="ic"><use href="#pick"/></svg>拾取构件</button>
        </div>
        <div class="group axis">
          <i class="grip"></i>
          <button class="tool"><svg class="ic"><use href="#twopt"/></svg>两点</button>
          <button class="tool"><svg class="ic"><use href="#parallel"/></svg>平行</button>
          <button class="tool"><svg class="ic"><use href="#angle"/></svg>点角<svg class="arr"><use href="#arrow"/></svg></button>
          <button class="tool"><svg class="ic"><use href="#threept"/></svg>三点辅轴<svg class="arr"><use href="#arrow"/></svg></button>
          <button class="tool"><svg class="ic"><use href="#eraser"/></svg>删除辅轴</button>
          <button class="tool"><svg class="ic"><use href="#dim"/></svg>尺寸标注<svg class="arr"><use href="#arrow"/></svg></button>
        </div>
      </div>
      <div class="toolrow">
        <div class="group">
          <i class="grip"></i>
          <button class="tool on"><svg class="ic"><use href="#cursor"/></svg>选择</button>
          <button class="drop" aria-label="选择方式"><svg class="arr tight"><use href="#arrow"/></svg></button>
          <i class="sep"></i>
          <button class="tool"><svg class="ic"><use href="#ptbox"/></svg>点</button>
          <button class="tool"><svg class="ic"><use href="#rotpt"/></svg>旋转点</button>
          <i class="sep"></i>
          <button class="tool"><svg class="ic"><use href="#smart"/></svg>智能布置<svg class="arr tight"><use href="#arrow"/></svg></button>
          <i class="sep"></i>
          <button class="tool"><svg class="ic"><use href="#note"/></svg>原位标注</button>
          <button class="tool"><svg class="ic"><use href="#coltable"/></svg>图元柱表</button>
          <button class="tool"><svg class="ic"><use href="#adjust"/></svg>调整柱端头</button>
          <button class="tool"><svg class="ic"><use href="#wallcol"/></svg>按墙位置绘制柱<svg class="arr"><use href="#arrow"/></svg></button>
          <button class="tool"><svg class="ic"><use href="#autocorner"/></svg>自动判断边角柱</button>
          <button class="tool"><svg class="ic"><use href="#check"/></svg>查改标注<svg class="arr"><use href="#arrow"/></svg></button>
        </div>
        <div class="group empty"><i class="grip"></i></div>
      </div>

      <svg class="canvas" role="img" aria-label="绘图区">
        <path d="M456 113h72v127h-72zM480 137v79h24v-79z" fill="#7f00ff" fill-rule="evenodd" shape-rendering="crispEdges"/>
        <g stroke="#f00" shape-rendering="crispEdges">
          <line x1="0" y1="176.500" x2="100%" y2="176.500"/>
          <line x1="491.500" y1="0" x2="491.500" y2="100%"/>
          <line x1="1018.500" y1="0" x2="1018.500" y2="100%"/>
        </g>
        <g fill="none" stroke="#008a00">
          <circle cx="491.500" cy="13" r="12.500"/><circle cx="1018.500" cy="13" r="12.500"/><circle cx="13" cy="176.500" r="12.500"/>
        </g>
        <g class="axis-name"><text x="492" y="19">6</text><text x="1019" y="19">7</text><text x="13" y="182">C</text></g>
        <path d="M53 260V222h-2l4-12 4 12h-2v38z" fill="#0f0"/>
        <path d="M55 258h37v-3l12 5-12 4v-2H55z" fill="#f00"/>
        <path d="M64 214l5 5 5-5M69 219v5" fill="none" stroke="#0f0"/>
        <path d="M92 239l9 9M101 239l-9 9" stroke="#f00"/>
      </svg>

      <div class="toolrow snaprow">
        <div class="group">
          <i class="grip"></i>
          <button class="tool"><svg class="ic"><use href="#ortho"/></svg>正交</button>
          <button class="tool on"><svg class="ic"><use href="#snap"/></svg>对象捕捉</button>
          <button class="tool"><svg class="ic"><use href="#dyn"/></svg>动态输入</button>
        </div>
        <div class="group">
          <i class="grip"></i>
          <button class="tool"><svg class="ic"><use href="#cross"/></svg>交点</button>
          <button class="tool on"><svg class="ic"><use href="#perp"/></svg>垂点</button>
          <button class="tool on"><svg class="ic"><use href="#mid"/></svg>中点</button>
          <button class="tool"><svg class="ic"><use href="#vertex"/></svg>顶点</button>
          <button class="tool"><svg class="ic"><use href="#coord"/></svg>坐标</button>
        </div>
        <div class="group">
          <i class="grip"></i>
          <label class="combo c-small"><select aria-label="偏移方式"><option>不偏移</option></select><svg class="arr"><use href="#arrow"/></svg></label>
          <i class="sep"></i>
          <label class="num">X=<span class="spin"><input value="0" disabled><svg viewBox="0 0 7 16"><path d="M1 3l2.500-3L6 3zM1 13l2.500 3L6 13z" fill="#666"/></svg></span>mm</label>
          <label class="num">Y=<span class="spin"><input value="0" disabled><svg viewBox="0 0 7 16"><path d="M1 3l2.500-3L6 3zM1 13l2.500 3L6 13z" fill="#666"/></svg></span>mm</label>
          <i class="sep"></i>
          <label class="tick"><input type="checkbox">旋转</label>
          <label class="num"><span class="spin wide"><input value="0.000" aria-label="旋转角度" disabled><svg viewBox="0 0 7 16"><path d="M1 3l2.500-3L6 3zM1 13l2.500 3L6 13z" fill="#666"/></svg></span>°</label>
        </div>
      </div>

      <section class="dock">
        <div class="dock-grip"><button aria-label="关闭面板"><svg viewBox="0 0 10 10"><path d="M.500.500h9v9h-9z" fill="#eee" stroke="#333"/><path d="M0 1h10" stroke="#c33"/><path d="M2 3l6 5M8 3L2 8" stroke="#222" stroke-width="1.500"/></svg></button><i></i></div>
        <div class="dock-main">
          <div class="group detail">
            <button class="tool nav" disabled aria-label="首条"><svg class="ic"><use href="#first"/></svg></button>
            <button class="tool nav" disabled aria-label="上一条"><svg class="ic"><use href="#prev"/></svg></button>
            <button class="tool nav" disabled aria-label="下一条"><svg class="ic"><use href="#next"/></svg></button>
            <button class="tool" disabled aria-label="末条"><svg class="ic"><use href="#last"/></svg></button>
            <i class="sep"></i>
            <button class="tool" disabled aria-label="上移"><svg class="ic"><use href="#up"/></svg></button>
            <button class="tool" disabled aria-label="下移"><svg class="ic"><use href="#down"/></svg></button>
            <i class="sep"></i>
            <button class="tool" disabled><svg class="ic"><use href="#insert"/></svg>插入</button>
            <button class="tool" disabled><svg class="ic"><use href="#delrow"/></svg>删除</button>
            <button class="tool" disabled><svg class="ic"><use href="#scale"/></svg>缩尺配筋</button>
            <button class="tool" disabled><svg class="ic"><use href="#info"/></svg>钢筋信息</button>
            <button class="tool" disabled><svg class="ic"><use href="#lib"/></svg>钢筋图库</button>
            <button class="tool"><svg class="ic"><use href="#other"/></svg>其他<svg class="arr tight"><use href="#arrow"/></svg></button>
            <button class="tool">关闭</button>
            <i class="sep"></i>
            <output>单构件钢筋总重(kg)：0</output>
          </div>
          <div class="grid">
            <div class="grid-view">
              <table>
                <colgroup><col class="w33"><col class="w73"><col class="w56"><col class="w36"><col class="w33"><col class="w201"><col class="w166"><col class="w156"><col class="w81"><col class="w61"><col class="w38"><col class="w39"><col class="w49"><col class="w61"><col class="w61"><col class="w81"></colgroup>
                <thead><tr><th></th><th>筋号</th><th>直径(mm)</th><th>级别</th><th>图号</th><th>图形</th><th>计算公式</th><th class="cur">公式描述</th><th>弯曲调整(mm)</th><th>长度(mm)</th><th>根数</th><th>搭接</th><th>损耗(%)</th><th>单重(kg)</th><th>总重(kg)</th><th class="cut">钢筋归类</th></tr></thead>
                <tbody><tr><th>1*</th><td class="caret"></td><td></td><td></td><td></td><td></td><td></td><td class="sel"></td><td></td><td></td><td></td><td></td><td></td><td></td><td></td><td></td></tr></tbody>
              </table>
            </div>
            <div class="hbar grid-h"><svg><use href="#sb-l"/></svg><i></i><svg><use href="#sb-r"/></svg></div>
          </div>
        </div>
      </section>
    </main>
  </div>

  <footer class="status">
    <span class="s-xy">X=308912 Y=14973</span><span class="s-mid">层高:4.5m</span><span class="s-base">底标高:4.45m</span><span class="s-num">0</span><span class="s-msg">按鼠标左键指定第一个角点，或拾取构件图元</span><span class="s-fps">413.2 FPS</span>
  </footer>
</div>

<div class="taskbar">
  <button class="start" aria-label="开始"><svg><use href="#t-win"/></svg></button>
  <label class="cortana"><i></i><input placeholder="在这里输入你要搜索的内容" aria-label="搜索"><svg><use href="#t-mic"/></svg></label>
  <button class="tb" aria-label="任务视图"><svg class="s18"><use href="#t-view"/></svg></button>
  <button class="tb" aria-label="浏览器"><svg class="s22"><use href="#t-fan"/></svg></button>
  <label class="ie"><svg class="s20"><use href="#t-ie"/></svg><input placeholder="搜索网页和文件" aria-label="搜索网页和文件"><svg class="s18"><use href="#t-mag"/></svg></label>
  <button class="tb" aria-label="提醒"><svg class="s28"><use href="#t-spiral"/></svg></button>
  <button class="tb run" aria-label="阅读"><svg class="s24"><use href="#t-book"/></svg></button>
  <button class="tb run"><span class="pdf">PDF</span></button>
  <button class="tb run" aria-label="便笺"><svg class="s24"><use href="#t-note"/></svg></button>
  <div class="tray">
    <div class="tb-scroll"><svg><use href="#chev-u"/></svg><svg><use href="#chev-d"/></svg></div>
    <svg class="s16 people"><use href="#t-people"/></svg>
    <svg class="s12"><use href="#t-chev"/></svg>
    <svg class="s16"><use href="#t-bat"/></svg>
    <svg class="s14"><use href="#t-wifi"/></svg>
    <svg class="s16"><use href="#t-vol"/></svg>
    <svg class="s24 kbd"><use href="#t-kbd"/></svg>
    <span class="ime">中</span>
    <svg class="s16"><use href="#t-sogou"/></svg>
    <time>12:21<br>2018/11/16</time>
    <svg class="s18"><use href="#t-msg"/></svg>
    <i class="peek"></i>
  </div>
</div>
</body>
</html>
```
FILE: styles.css
```css
* { box-sizing: border-box; }
html, body { height: 100%; }
body {
  margin: 0;
  display: flex;
  flex-direction: column;
  overflow: hidden;
  background: #f0f0f0;
  color: #000;
  font: 12px/16px "Noto Sans", "Noto Sans CJK SC", sans-serif;
}
h1, h2, ul { margin: 0; padding: 0; font-weight: normal; }
ul { list-style: none; }
button, select, input {
  margin: 0; padding: 0; border: 0; background: none;
  font: inherit; color: inherit; white-space: nowrap;
}
svg { display: block; flex: none; }
.defs { position: absolute; width: 0; height: 0; }
.window { flex: 1; min-height: 0; display: flex; flex-direction: column; }

.titlebar {
  position: relative;
  height: 23px; flex: none;
  display: flex; align-items: center; gap: 5px;
  padding-left: 2px;
  background: #fff; color: #8e8e8e;
}
.titlebar h1 { font-size: 13px; white-space: nowrap; }
.titlebar h1 span { font-size: 12px; }
.badge {
  position: absolute; top: -26px; left: 719px;
  width: 43px; height: 43px; padding-top: 24px;
  border: 1px solid #2c9c48; border-radius: 50%;
  background: #3ec15f; color: #fff;
  font-weight: bold; text-align: center; line-height: 16px;
  box-shadow: 0 1px 3px #888;
}
.wincontrols { display: flex; margin-left: auto; }
.wincontrols button { width: 46px; height: 20px; display: flex; align-items: center; justify-content: center; }
.wincontrols svg { width: 10px; height: 10px; }

.menubar { height: 27px; flex: none; display: flex; align-items: center; gap: 11px; padding-left: 7px; }
.menubar .tool { margin-right: -7px; }
.stub { width: 24px; height: 24px; margin-left: auto; margin-right: -9px; background: #f9f9f9; }
.account { display: flex; align-items: center; height: 24px; padding: 0 4px 0 1px; gap: 3px; background: #f9f9f9; }
.account .tool { margin: 0 -1px 0 0; }

.toprow { height: 29px; flex: none; display: flex; align-items: center; gap: 3px; padding-left: 1px; }
.group {
  display: flex; align-items: center; gap: 1px;
  height: 26px; padding: 0 2px;
  background: linear-gradient(#fdfdfd, #ededed);
}
.toprow .group { height: 28px; }
.quick { flex: none; width: 149px; }
.quick, .common, .view { padding-left: 1px; }
.common { flex: none; width: 548px; }
.view { flex: 1; min-width: 0; }
.more { width: 9px; height: 6px; margin: 5px 0 0 auto; align-self: flex-start; }

.tool { display: flex; align-items: center; flex: none; gap: 4px; height: 22px; padding: 0 3px; }
.tool:disabled { color: #8c8c8c; }
.tool.on { background: #dcebf7; box-shadow: inset 0 0 0 1px #0078d7; }
.ic { width: 16px; height: 16px; }
.arr { width: 7px; height: 4px; margin-left: 2px; }
.arr.tight { margin-left: -2px; }
.drop { width: 10px; height: 22px; }
.drop .arr.tight { margin-left: 2px; }
.sep { flex: none; width: 1px; height: 18px; margin: 0 2px; background: #bbb; }
.grip {
  flex: none; width: 3px; height: 16px; margin: 0 -1px 0 2px;
  background: repeating-linear-gradient(#bdbdbd 0 2px, transparent 2px 4px);
}

.combo { display: flex; align-items: center; flex: none; width: 69px; height: 22px; padding: 0 2px; margin-right: 2px; background: #fff; }
.combo select { appearance: none; flex: 1; min-width: 0; }
.combo .arr { margin: 0; }
.c-small { width: 58px; }
.c-view { width: 61px; gap: 2px; margin-right: 1px; }

.body { flex: 1; min-height: 0; display: flex; }
.side { width: 161px; flex: none; display: flex; flex-direction: column; padding: 2px 0 0 0; }
.side-title { height: 17px; flex: none; display: flex; align-items: center; border: 1px solid #aaa; border-left: 0; }
.side-title h2 { flex: 1; font-size: 13px; }
.side-title button { width: 18px; padding: 0 4px; }
.side-title svg { width: 10px; height: 10px; }
.section { height: 22px; flex: none; border: 1px solid #a0a0a0; background: #f0f0f0; margin-left: 1px; }
.section + .section { border-top: 0; }
.side-tools { height: 27px; flex: none; display: flex; gap: 7px; align-items: center; padding: 2px 0 0 7px; background: #f8f8f8; }
.side-tools svg { width: 16px; height: 13px; }
.treebox { flex: 1; min-height: 0; display: flex; flex-direction: column; margin: 0 0 2px 2px; border: 1px solid #828790; padding: 1px 2px 1px 0; background: #fff; }
.treeview { flex: 1; min-height: 0; display: flex; overflow: hidden; }
.tree { flex: 1; min-width: 0; overflow: hidden; font-family: "Liberation Serif", "Noto Sans CJK SC", serif; white-space: nowrap; }
.node { display: flex; align-items: center; height: 16px; padding-left: 6px; }
.node .ic { margin: 0 4px 0 7px; }
.chev { width: 10px; height: 10px; }
.tree ul { margin-left: 12px; border-left: 1px dotted #888; padding-left: 18px; }
.tree li li { display: flex; height: 16px; }
.tree li li::before {
  content: ""; flex: none; width: 11px; height: 16px;
  background:
    repeating-linear-gradient(90deg, #888 0 1px, transparent 1px 2px) 0 8px / 11px 1px no-repeat,
    repeating-linear-gradient(#888 0 1px, transparent 1px 2px) 0 0 / 1px 16px no-repeat;
}
.tree li li:last-child:not(.open-end)::before { background-size: 11px 1px, 1px 8px; }
.leaf { display: flex; align-items: center; gap: 4px; padding-right: 6px; }
.leaf.on { background: #d9d9d9; }
.vbar { width: 16px; flex: none; display: flex; flex-direction: column; align-items: center; background: #f0f0f0; padding: 4px 0; }
.vbar i { width: 100%; height: 56%; margin: 64px 0 auto; background: #cdcdcd; }
.vbar svg, .hbar svg { width: 10px; height: 10px; }
.hbar { height: 16px; flex: none; display: flex; align-items: center; background: #f0f0f0; padding: 0 3px 0 4px; }
.hbar i { height: 16px; background: #cdcdcd; }
.side-h i { width: 95px; margin: 0 auto 0 4px; }
.side-h { padding-right: 20px; }
.grid-h i { width: 65%; margin: 0 auto 0 4px; }

.work { flex: 1; min-width: 0; display: flex; flex-direction: column; margin-left: 5px; }
.toolrow { height: 28px; flex: none; display: flex; align-items: center; gap: 2px; padding-left: 1px; }
.axis { margin-left: 38px; padding-left: 3px; }
.empty { width: 31px; }
.canvas { flex: 1; width: 100%; min-height: 0; background: #000; }
.axis-name { fill: #ddd; font: 17px "Liberation Mono", monospace; text-anchor: middle; }
.snaprow { height: 30px; }
.num { display: flex; align-items: center; gap: 2px; margin-right: 1px; color: #777; font-size: 13px; }
.spin { display: flex; align-items: center; width: 58px; height: 23px; padding: 0 4px; border: 1px solid #777; }
.spin.wide { width: 68px; }
.spin input { flex: 1; min-width: 0; padding-right: 11px; text-align: right; font-size: 12px; }
.spin svg { width: 7px; height: 16px; }
.tick { display: flex; align-items: center; gap: 8px; padding-right: 3px; }
.tick input { appearance: none; width: 11px; height: 11px; border: 1px solid #aaa; background: #f8f8f8; }

.dock { height: 203px; flex: none; display: flex; padding-top: 4px; }
.dock-grip { width: 12px; flex: none; display: flex; flex-direction: column; align-items: center; gap: 3px; }
.dock-grip button { width: 10px; height: 10px; }
.dock-grip svg { width: 10px; height: 10px; }
.dock-grip i { flex: 1; width: 6px; background: repeating-linear-gradient(90deg, transparent 0 2px, #f0f0f0 2px 4px), repeating-linear-gradient(#c4c4c4 0 2px, #f0f0f0 2px 5px); }
.dock-main { flex: 1; min-width: 0; display: flex; flex-direction: column; padding-right: 2px; }
.detail { padding-left: 1px; }
.detail .nav { margin-right: 1px; }
.detail output { padding-left: 3px; }
.grid { flex: 1; min-height: 0; display: flex; flex-direction: column; border: 1px solid #a6a6a6; background: #fff; padding: 0 1px 2px 0; }
.grid-view { flex: 1; min-height: 0; overflow: hidden; }
table { border-collapse: collapse; table-layout: fixed; width: 1265px; font-family: "Liberation Serif", "Noto Sans CJK SC", serif; }
th, td { height: 19px; padding: 0; border: 1px solid #bdbdbd; border-left: 0; border-top: 0; font-weight: normal; overflow: hidden; white-space: nowrap; line-height: 18px; }
thead th { height: 20px; background: linear-gradient(#fff, #f0f0f0); }
thead .cur { background: linear-gradient(#fbdc9c, #f2c062); color: #5a0050; }
thead .cut { text-align: left; padding-left: 11px; }
tbody th { background: #ffd28a; color: #5a0050; }
.sel { background: #d8e9f7; }
.caret { border-right-color: #000; }
.w33 { width: 33px; } .w73 { width: 73px; } .w56 { width: 56px; } .w36 { width: 36px; }
.w201 { width: 201px; } .w166 { width: 166px; } .w156 { width: 156px; } .w81 { width: 81px; }
.w61 { width: 61px; } .w38 { width: 38px; } .w39 { width: 39px; } .w49 { width: 49px; }
table { width: 1225px; }

.status { height: 22px; flex: none; display: flex; gap: 3px; padding-top: 2px; font-family: "Liberation Serif", "Noto Sans CJK SC", serif; }
.status span { border: 1px solid #d7d7d7; padding: 0 1px; line-height: 18px; white-space: nowrap; background: linear-gradient(#f3f3f3, #fafafa); }
.status .s-xy { width: 148px; padding-left: 0; }
.s-mid { width: 77px; }
.s-base { width: 96px; }
.s-num { width: 46px; }
.s-msg { flex: 1; }
.s-fps { width: 70px; }

.taskbar { height: 40px; flex: none; display: flex; align-items: center; background: #06161b; color: #fff; }
.start { width: 48px; height: 40px; flex: none; display: flex; align-items: center; justify-content: center; background: #000; }
.start svg { width: 16px; height: 16px; }
.cortana { width: 344px; height: 40px; flex: none; display: flex; align-items: center; gap: 10px; padding: 0 14px 0 9px; background: #f2f2f2; color: #444; }
.cortana i { width: 21px; height: 21px; border: 3px solid #111; border-radius: 50%; }
.cortana input { flex: 1; min-width: 0; font-size: 14px; }
.cortana input::placeholder { color: #444; opacity: 1; }
.cortana svg { width: 12px; height: 18px; }
.tb { width: 49px; height: 40px; flex: none; display: flex; align-items: center; justify-content: center; }
.tb.run { width: 41px; margin-right: 8px; border-top: 3px solid transparent; border-bottom: 2px solid #76b9ed; }
.s12 { width: 12px; height: 12px; } .s14 { width: 14px; height: 14px; } .s16 { width: 16px; height: 16px; }
.s18 { width: 18px; height: 18px; } .s20 { width: 20px; height: 20px; } .s22 { width: 22px; height: 22px; }
.s24 { width: 24px; height: 24px; } .s28 { width: 28px; height: 26px; }
.ie { width: 150px; height: 31px; flex: none; display: flex; align-items: center; gap: 4px; padding: 0 6px 0 3px; border: 1px solid #777; background: #464646; margin-left: 2px; }
.ie input { flex: 1; min-width: 0; }
.ie input::placeholder { color: #aaa; opacity: 1; }
.ie + .tb { margin-right: 7px; }
.pdf { width: 24px; height: 24px; border: 1px solid #de9455; border-radius: 4px; background: #b8601c; color: #fff; font-size: 10px; font-weight: bold; line-height: 22px; text-align: center; }
.tray { margin-left: auto; display: flex; align-items: center; gap: 9px; height: 40px; }
.tb-scroll { width: 17px; height: 40px; background: #f0f0f0; display: flex; flex-direction: column; align-items: center; justify-content: space-between; padding: 4px 0; }
.tb-scroll svg { width: 10px; height: 10px; }
.people { margin: 0 12px 0 14px; }
.kbd { height: 14px; }
.ime { width: 16px; text-align: center; line-height: 20px; font-size: 13px; margin-right: 2px; }
.tray time { margin: 0 8px 0 4px; text-align: center; line-height: 19px; }
.peek { width: 1px; height: 40px; margin: 0 4px 0 10px; background: #666; }
```
